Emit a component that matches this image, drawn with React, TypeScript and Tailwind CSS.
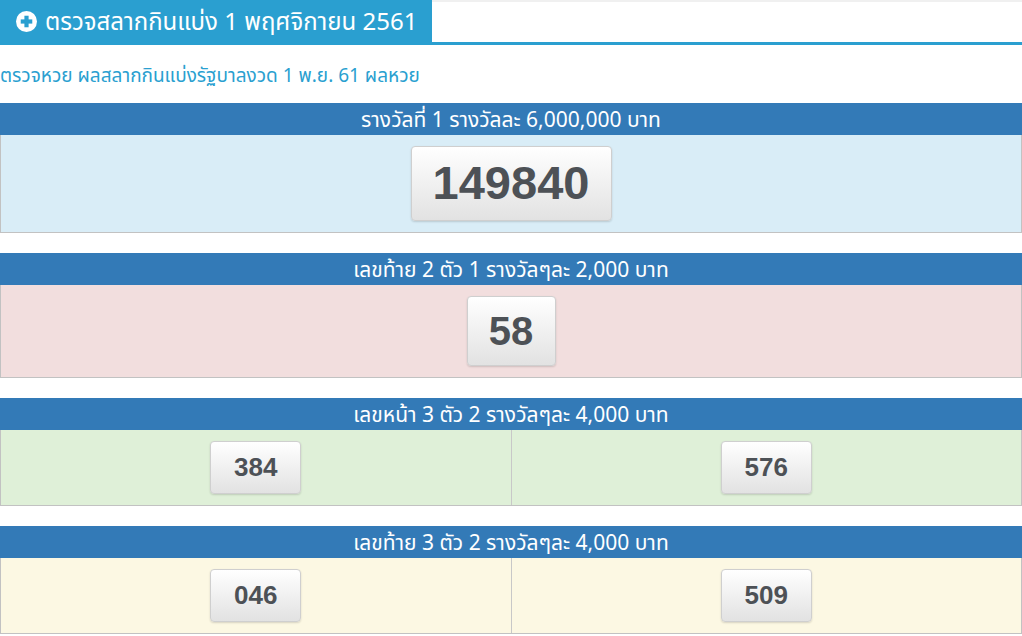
import React from 'react';

const thai = "font-['Noto_Sans','Noto_Sans_Thai','DejaVu_Sans',sans-serif]";
const num = "font-['Liberation_Sans',Arial,sans-serif]";

function Ball({ value, size }: { value: string; size: 'xl' | 'lg' | 'md' }) {
  const cls =
    size === 'xl'
      ? 'w-[201px] h-[75px] text-[47px]'
      : size === 'lg'
        ? 'w-[89px] h-[70px] text-[40px]'
        : 'w-[91px] h-[53px] text-[26px]';
  return (
    <div
      className={`${cls} ${num} flex items-center justify-center rounded-[4px] border border-[#cfcfcf] bg-gradient-to-b from-white to-[#e2e2e2] font-bold text-[#4d5156] shadow-[0_1px_2px_rgba(0,0,0,0.15)]`}
    >
      {value}
    </div>
  );
}

function Prize({
  title,
  bg,
  values,
  size,
  bodyH,
}: {
  title: string;
  bg: string;
  values: string[];
  size: 'xl' | 'lg' | 'md';
  bodyH: string;
}) {
  return (
    <section className="mb-5">
      <div className={`flex h-8 items-center justify-center bg-[#337ab7] text-[21px] leading-none text-white ${thai}`}>
        {title}
      </div>
      <div className={`flex ${bodyH} ${bg} border border-t-0 border-[#c2c2c2]`}>
        {values.map((v, i) => (
          <div
            key={v}
            className={`flex flex-1 items-center justify-center ${i > 0 ? 'border-l border-[#c8c8c8]' : ''}`}
          >
            <Ball value={v} size={size} />
          </div>
        ))}
      </div>
    </section>
  );
}

export default function App() {
  return (
    <main className="w-[1022px] bg-white">
      <header className="flex border-b-[3px] border-[#2a9fd0]">
        <div className={`flex h-[42px] w-[432px] items-center gap-2 bg-[#2a9fd0] pl-4 text-[24px] leading-none text-white ${thai}`}>
          <svg width="21" height="21" viewBox="0 0 20 20">
            <circle cx="10" cy="10" r="10" fill="white" />
            <rect x="4.5" y="8" width="11" height="4" fill="#2a9fd0" />
            <rect x="8" y="4.5" width="4" height="11" fill="#2a9fd0" />
          </svg>
          <span>ตรวจสลากกินแบ่ง 1 พฤศจิกายน 2561</span>
        </div>
        <div className="flex-1 border-t-2 border-[#f0f0f0]" />
      </header>

      <p className={`pt-[18px] pb-[16px] text-[19px] text-[#2a9fd0] leading-[24px] ${thai}`}>
        ตรวจหวย ผลสลากกินแบ่งรัฐบาลงวด 1 พ.ย. 61 ผลหวย
      </p>

      <Prize
        title="รางวัลที่ 1 รางวัลละ 6,000,000 บาท"
        bg="bg-[#d9edf7]"
        values={['149840']}
        size="xl"
        bodyH="h-[98px]"
      />
      <Prize
        title="เลขท้าย 2 ตัว 1 รางวัลๆละ 2,000 บาท"
        bg="bg-[#f2dede]"
        values={['58']}
        size="lg"
        bodyH="h-[93px]"
      />
      <Prize
        title="เลขหน้า 3 ตัว 2 รางวัลๆละ 4,000 บาท"
        bg="bg-[#dff0d8]"
        values={['384', '576']}
        size="md"
        bodyH="h-[76px]"
      />
      <Prize
        title="เลขท้าย 3 ตัว 2 รางวัลๆละ 4,000 บาท"
        bg="bg-[#fcf8e3]"
        values={['046', '509']}
        size="md"
        bodyH="h-[76px]"
      />
    </main>
  );
}
